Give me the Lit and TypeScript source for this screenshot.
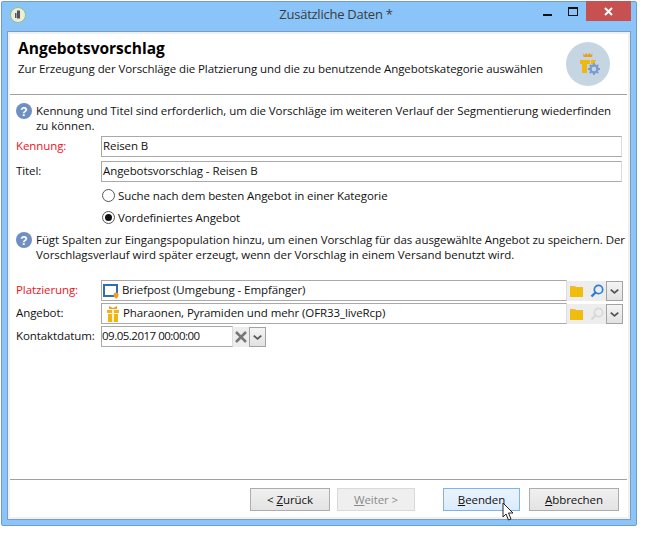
import { LitElement, html, css, svg } from "lit";
import { customElement } from "lit/decorators.js";

const help = html`<svg class="help" width="16" height="16" viewBox="0 0 16 16"><circle cx="8" cy="8" r="8" fill="#6f8fc0"/><text x="8" y="12.5" text-anchor="middle" font-family="Liberation Sans" font-weight="700" font-size="12" fill="#fff">?</text></svg>`;
const chevron = svg`<path d="M4 6.500 L8 10 L12 6.500" fill="none" stroke="#555" stroke-width="2"/>`;
const folder = html`<svg width="13" height="12" viewBox="0 0 13 12"><path d="M0 1h5l1 1h7v1H0z" fill="#eeb93a"/><path d="M0 3h13v9H0z" fill="#f0bd0c"/></svg>`;
const lens = (c: string) => html`<svg width="14" height="14" viewBox="0 0 14 14"><circle cx="8.500" cy="5.500" r="4.200" fill="none" stroke="${c}" stroke-width="1.700"/><path d="M5.500 8.500 L1.500 12.500" stroke="${c}" stroke-width="2.400"/></svg>`;
const drop = html`<span class="drop"><svg width="16" height="16" viewBox="0 0 16 16">${chevron}</svg></span>`;

@customElement("app-root")
export class AppRoot extends LitElement {
  static styles = css`
    :host { display: block; width: 655px; height: 550px; background: #fff; font-family: "Open Sans", "Noto Sans", sans-serif; font-size: 11.5px; letter-spacing: -0.09px; color: #111; overflow: hidden; }
    .win { margin: 1px 0 0 1px; width: 636px; height: 525px; box-sizing: border-box; background: #8ac4f9; border: 1px solid #6f9ccb; border-radius: 2px; display: flex; flex-direction: column; padding: 0 5px 5px 5px; }
    .title { height: 29px; display: flex; align-items: flex-start; position: relative; flex: none; }
    .logo { position: absolute; left: 3px; top: 5px; }
    .title-text { flex: 1; text-align: center; font-size: 13px; letter-spacing: -0.25px; color: #3c3c3c; padding-left: 34px; margin-top: 3px; line-height: 18px; }
    .ctrls { position: absolute; right: 0; top: -1px; display: flex; align-items: flex-start; }
    .ctl { width: 26px; height: 20px; display: flex; align-items: center; justify-content: center; }
    .min svg { margin-top: 7px; }
    .close { width: 45px; background: #c75050; }
    .client { flex: 1; background: #fff; border: 1px solid #7d9dc0; display: flex; flex-direction: column; box-sizing: border-box; padding: 2px; box-shadow: inset 0 0 0 2px #f0f0f0; }
    .head { height: 61px; flex: none; box-sizing: border-box; padding: 4px 0 0 8px; border-bottom: 1px solid #a0a0a0; margin-right: 1px; position: relative; }
    .h1 { font-size: 15.5px; letter-spacing: 0; font-weight: 700; color: #000; line-height: 20px; }
    .sub { line-height: 17px; margin-top: 2px; color: #111; white-space: nowrap; }
    .badge { position: absolute; right: 17px; top: 8px; }
    .body { flex: 1; padding: 8px 0 0 6px; }
    .note { display: flex; gap: 4px; line-height: 15px; letter-spacing: -0.06px; }
    .note.second { margin-top: 4px; }
    .help { flex: none; }
    .note div { white-space: pre-line; }
    .row { display: flex; align-items: center; height: 21px; margin-top: 2px; }
    .row.first { margin-top: 3px; }
    .row.titel { margin-top: 4px; }
    .row.place { margin-top: 18px; }
    .label { width: 85px; flex: none; margin-top: -3px; }
    .red { color: #f0141e; }
    .in { box-sizing: border-box; height: 21px; border: 1px solid #a9a9a9; border-right-color: #dcdcdc; padding: 0 0 2px 1px; display: flex; align-items: center; background: #fff; white-space: nowrap; overflow: hidden; }
    .w1 { width: 521px; }
    .w2 { width: 466px; }
    .w3 { width: 132px; padding-left: 0; letter-spacing: -0.5px; }
    .tools { box-sizing: border-box; display: flex; align-items: center; gap: 7px; padding-left: 3px; width: 39px; height: 20px; background: #ededed; flex: none; }
    .clear { width: 16px; height: 20px; background: #ededed; flex: none; }
    .drop { box-sizing: border-box; width: 17px; height: 20px; border: 1px solid #a3a3a3; background: linear-gradient(#f4f4f4, #e2e2e2); display: inline-flex; align-items: center; justify-content: center; flex: none; }
    .radio { display: flex; align-items: center; gap: 3px; height: 22px; padding-left: 85px; }
    .radio.first { margin-top: 2px; }
    .dot { box-sizing: border-box; width: 13px; height: 13px; border-radius: 50%; border: 1px solid #555; background: #fff; display: flex; align-items: center; justify-content: center; margin-left: 1px; }
    .dot i { width: 7px; height: 7px; border-radius: 50%; background: #111; display: block; }
    .ricon { flex: none; margin: 2px 3px 0 0; }
    .gift { margin-left: 3px; }
    .foot { height: 29px; flex: none; border-top: 1px solid #a0a0a0; margin-right: 1px; display: flex; align-items: flex-start; padding-top: 8px; position: relative; }
    .btn { box-sizing: border-box; height: 23px; padding-bottom: 1px; border: 1px solid #adadad; background: linear-gradient(#f0f0f0, #e3e3e3); display: flex; align-items: center; justify-content: center; color: #111; flex: none; }
    .btn u { text-underline-offset: 1px; }
    .back { margin-left: 240px; width: 80px; }
    .next { margin-left: 7px; width: 78px; background: #efefef; border-color: #d9d9d9; color: #8a8a8a; }
    .finish { margin-left: 28px; width: 77px; background: linear-gradient(#e9f3fc, #dcecfc); border-color: #7eb4ea; }
    .cancel { margin-left: 9px; width: 90px; }
    .cursor { position: absolute; left: 492px; top: 22px; }
  `;
  render() {
    return html`<div class="win">
      <div class="title">
        <svg class="logo" width="16" height="16" viewBox="0 0 16 16"><circle cx="8" cy="8" r="7.500" fill="#e9eee2" stroke="#9cc06a"/><path d="M7 3.500h3v8H7zM5 6h1.500v5H5z" fill="#555"/></svg>
        <div class="title-text">Zusätzliche Daten *</div>
        <div class="ctrls">
          <div class="ctl min"><svg width="9" height="3"><rect width="9" height="2" y="1" fill="#111"/></svg></div>
          <div class="ctl"><svg width="10" height="9"><rect x=".5" y=".5" width="9" height="8" fill="none" stroke="#111"/><rect width="10" height="2" fill="#111"/></svg></div>
          <div class="ctl close"><svg width="9" height="9"><path d="M1 1l7 7M8 1l-7 7" stroke="#fff" stroke-width="2"/></svg></div>
        </div>
      </div>
      <div class="client">
        <div class="head">
          <div class="h1">Angebotsvorschlag</div>
          <div class="sub">Zur Erzeugung der Vorschläge die Platzierung und die zu benutzende Angebotskategorie auswählen</div>
          <svg class="badge" width="44" height="44" viewBox="0 0 44 44">
            <circle cx="22" cy="22" r="22" fill="#c5d5e2"/>
            <path d="M17 11l1.500 2 2-2 1 2 2-2 1.500 2 1.500-2-.5 4H17.500z" fill="#e8a020"/>
            <path d="M14 18h10v4h-3v9h-5v-9h-2z" fill="#efb70f"/>
            <path d="M25 18h5v1h-1v3h-4z" fill="#efb70f"/>
            <g transform="translate(28 27)"><circle r="3.500" fill="none" stroke="#7a9ccc" stroke-width="2.400"/><path d="M0-6v2.500M0 3.500v2.500M-6 0h2.500M3.500 0h2.500M-4.200-4.200l2 2M2.200 2.200l2 2M4.200-4.200l-2 2M-2.200 2.200l-2 2" stroke="#7a9ccc" stroke-width="1.800"/></g>
          </svg>
        </div>
        <div class="body">
          <div class="note">${help}<div>Kennung und Titel sind erforderlich, um die Vorschläge im weiteren Verlauf der Segmentierung wiederfinden
zu können.</div></div>
          <div class="row first"><div class="label red">Kennung:</div><div class="in w1">Reisen B</div></div>
          <div class="row titel"><div class="label">Titel:</div><div class="in w1">Angebotsvorschlag - Reisen B</div></div>
          <div class="radio first"><span class="dot"></span><span>Suche nach dem besten Angebot in einer Kategorie</span></div>
          <div class="radio"><span class="dot"><i></i></span><span>Vordefiniertes Angebot</span></div>
          <div class="note second">${help}<div>Fügt Spalten zur Eingangspopulation hinzu, um einen Vorschlag für das ausgewählte Angebot zu speichern. Der
Vorschlagsverlauf wird später erzeugt, wenn der Vorschlag in einem Versand benutzt wird.</div></div>
          <div class="row place"><div class="label red">Platzierung:</div><div class="in w2">
            <svg class="ricon" width="16" height="16" viewBox="0 0 16 16"><rect x="1" y="2" width="13" height="11" fill="none" stroke="#2f6db5" stroke-width="2"/><circle cx="13" cy="12" r="2.500" fill="#ef9d20"/><path d="M11 13.500l2 2.500 2-2.500z" fill="#ef9d20"/></svg>Briefpost (Umgebung - Empfänger)</div>
            <div class="tools">${folder}${lens("#2f7fd0")}</div>${drop}</div>
          <div class="row"><div class="label">Angebot:</div><div class="in w2">
            <svg class="ricon gift" width="14" height="18" viewBox="0 0 14 18"><path d="M3 1l4 2 4-2v3H3z" fill="#eda31a"/><path d="M1 5h12v3H1zM2 9h10v8H2z" fill="#f0b417"/><path d="M6 5h2v12H6z" fill="#fff3c0"/></svg>Pharaonen, Pyramiden und mehr (OFR33_liveRcp)</div>
            <div class="tools">${folder}${lens("#d8d8d8")}</div>${drop}</div>
          <div class="row"><div class="label">Kontaktdatum:</div><div class="in w3">09.05.2017 00:00:00</div>
            <svg class="clear" viewBox="0 0 16 20"><path d="M3 5l10 10M13 5L3 15" stroke="#777" stroke-width="2.500"/></svg>${drop}</div>
        </div>
        <div class="foot">
          <div class="btn back">&lt;&nbsp;<u>Z</u>urück</div>
          <div class="btn next"><u>W</u>eiter &gt;</div>
          <div class="btn finish"><u>B</u>eenden</div>
          <div class="btn cancel"><u>A</u>bbrechen</div>
          <svg class="cursor" width="14" height="20" viewBox="0 0 14 20"><path d="M1 1v14l3-3 2.500 6 2.500-1-2.500-6H11z" fill="#fff" stroke="#222"/></svg>
        </div>
      </div>
    </div>`;
  }
}
